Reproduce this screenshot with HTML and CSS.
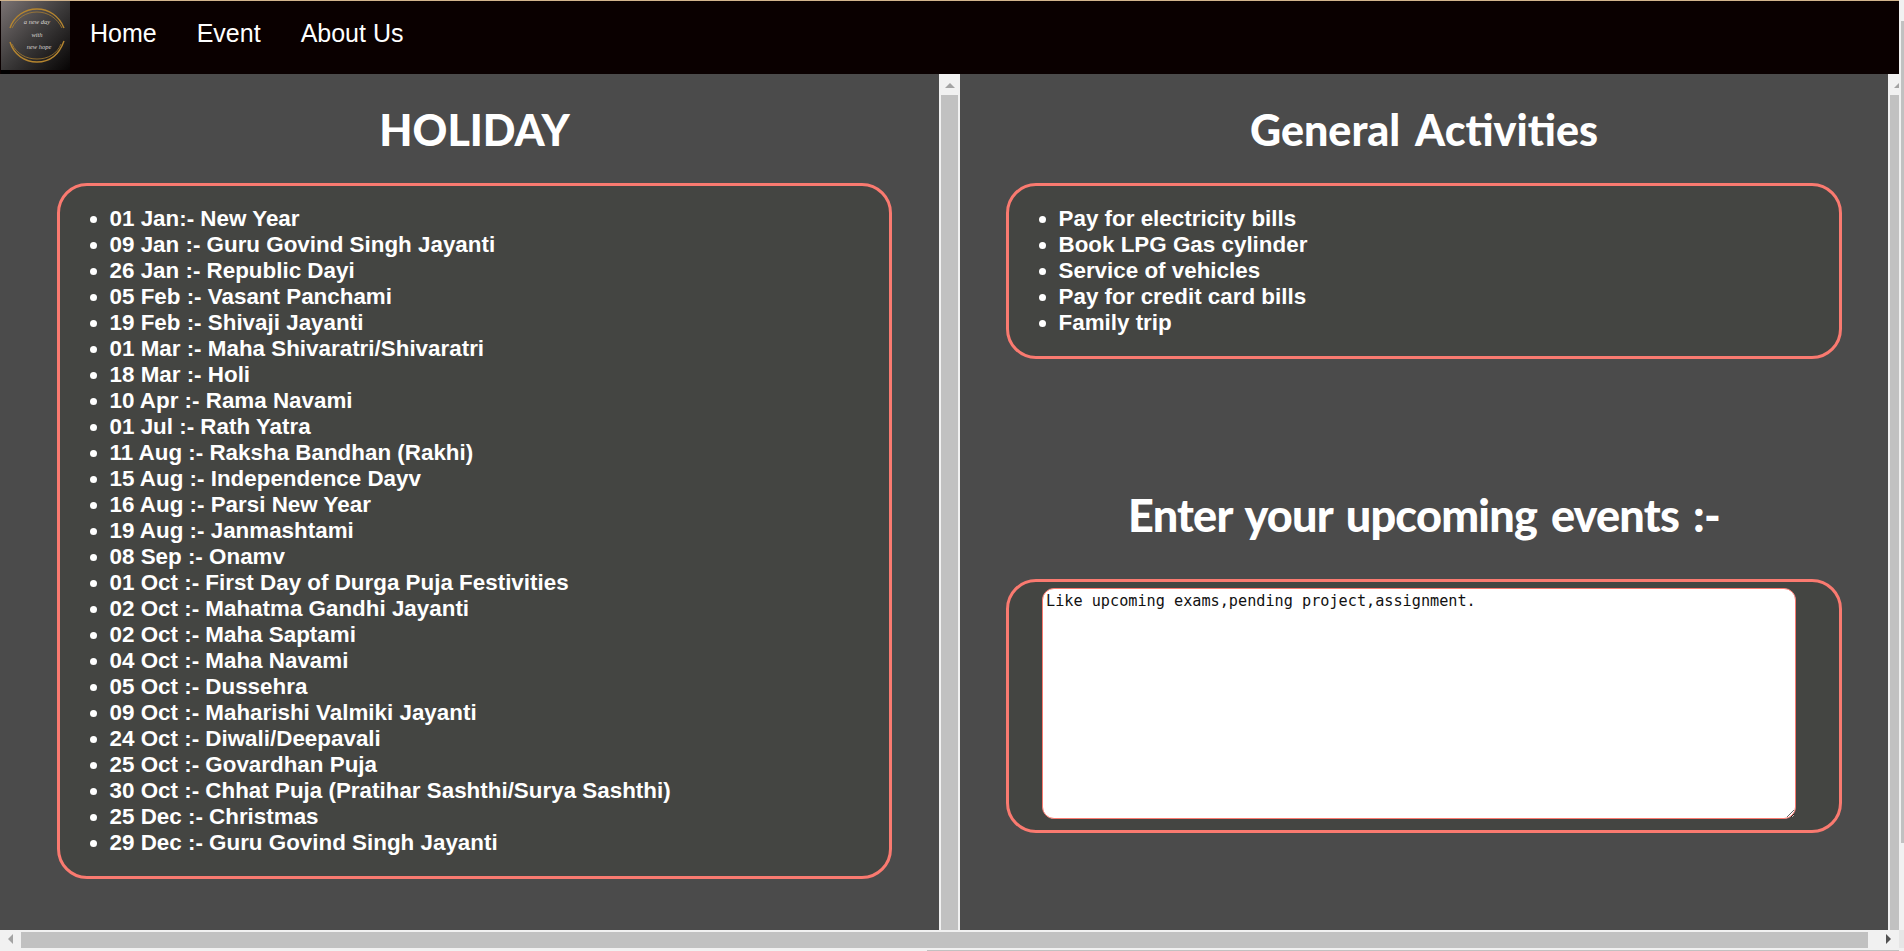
FILE: index.html
```html
<!DOCTYPE html>
<html lang="en">
<head>
<meta charset="utf-8">
<title>Event Planner</title>
<link rel="stylesheet" href="styles.css">
</head>
<body>
<div class="page">
  <div class="viewport">
    <nav class="nav">
      <svg class="logo" width="69" height="73" viewBox="0 0 69 73" aria-label="a new day with new hope">
        <defs>
          <linearGradient id="logoBg" x1="0" y1="0" x2="1" y2="1">
            <stop offset="0" stop-color="#7a7272"/>
            <stop offset="0.5" stop-color="#3c3a3a"/>
            <stop offset="1" stop-color="#060404"/>
          </linearGradient>
        </defs>
        <rect width="69" height="73" fill="#0a0000"/>
        <rect y="69" width="9" height="4" fill="#000"/>
        <rect width="69" height="69" fill="url(#logoBg)"/>
        <g fill="none" stroke="#b5852f">
          <path d="M9 27C13 15 24 8 36 8S58 15 63 27" stroke-width="1.4"/>
          <path d="M11 27C16 17 25 11 36 11S56 17 61 27" stroke-width="0.7"/>
          <path d="M9 41C13 54 24 61 36 61S58 54 63 40" stroke-width="1.4"/>
          <path d="M11 43C16 53 25 58 36 58S56 53 60 43" stroke-width="0.7"/>
        </g>
        <g class="logo-text" text-anchor="middle">
          <text x="36" y="23">a new day</text>
          <text x="36" y="36">with</text>
          <text x="38" y="48">new hope</text>
        </g>
      </svg>
      <a class="nav-link" href="#">Home</a>
      <a class="nav-link" href="#">Event</a>
      <a class="nav-link" href="#">About Us</a>
    </nav>
    <div class="split">
      <section class="pane pane-left">
        <h1 class="title">HOLIDAY</h1>
        <div class="card">
          <ul class="list">
            <li>01 Jan:- New Year</li>
            <li>09 Jan :- Guru Govind Singh Jayanti</li>
            <li>26 Jan :- Republic Dayi</li>
            <li>05 Feb :- Vasant Panchami</li>
            <li>19 Feb :- Shivaji Jayanti</li>
            <li>01 Mar :- Maha Shivaratri/Shivaratri</li>
            <li>18 Mar :- Holi</li>
            <li>10 Apr :- Rama Navami</li>
            <li>01 Jul :- Rath Yatra</li>
            <li>11 Aug :- Raksha Bandhan (Rakhi)</li>
            <li>15 Aug :- Independence Dayv</li>
            <li>16 Aug :- Parsi New Year</li>
            <li>19 Aug :- Janmashtami</li>
            <li>08 Sep :- Onamv</li>
            <li>01 Oct :- First Day of Durga Puja Festivities</li>
            <li>02 Oct :- Mahatma Gandhi Jayanti</li>
            <li>02 Oct :- Maha Saptami</li>
            <li>04 Oct :- Maha Navami</li>
            <li>05 Oct :- Dussehra</li>
            <li>09 Oct :- Maharishi Valmiki Jayanti</li>
            <li>24 Oct :- Diwali/Deepavali</li>
            <li>25 Oct :- Govardhan Puja</li>
            <li>30 Oct :- Chhat Puja (Pratihar Sashthi/Surya Sashthi)</li>
            <li>25 Dec :- Christmas</li>
            <li>29 Dec :- Guru Govind Singh Jayanti</li>
          </ul>
        </div>
      </section>
      <div class="vbar vbar-mid">
        <div class="vbtn"><span class="arrow-up"></span></div>
        <div class="thumb"></div>
      </div>
      <section class="pane pane-right">
        <h1 class="title">General Activities</h1>
        <div class="card">
          <ul class="list">
            <li>Pay for electricity bills</li>
            <li>Book LPG Gas cylinder</li>
            <li>Service of vehicles</li>
            <li>Pay for credit card bills</li>
            <li>Family trip</li>
          </ul>
        </div>
        <h1 class="title title-large">Enter your upcoming events :-</h1>
        <div class="card card-input">
          <textarea class="notes" placeholder="">Like upcoming exams,pending project,assignment.</textarea>
        </div>
      </section>
      <div class="vbar vbar-end">
        <div class="vbtn vbtn-end"><span class="arrow-up-cut"></span></div>
        <div class="thumb"></div>
      </div>
    </div>
    <div class="hbar">
      <div class="hbtn"><span class="arrow-left"></span></div>
      <div class="thumb"></div>
      <div class="hbtn hbtn-end"><span class="arrow-right"></span></div>
    </div>
    <div class="strip"><div class="strip-thumb"></div></div>
  </div>
  <div class="outerbar">
    <div class="outer-thumb"></div>
    <div class="corner"></div>
  </div>
</div>
</body>
</html>
```

FILE: styles.css
```css
* { box-sizing: border-box; }
html, body { margin: 0; padding: 0; }
body { font-family: "Liberation Sans", Arial, sans-serif; background: #f1f1f1; }

.page { display: flex; width: 1904px; height: 951px; overflow: hidden; background: #f1f1f1; }
.viewport { display: flex; flex-direction: column; width: 1899px; height: 951px; }

.nav { display: flex; align-items: flex-start; flex: none; height: 74px; padding-left: 1px; background: #0a0000; border-top: 1px solid #d2b48c; }
.logo { display: block; flex: none; }
.logo-text { fill: #d8d4d0; font-family: "Liberation Serif", serif; font-style: italic; font-size: 6.5px; }
.nav-link { padding: 0 20px; color: #fff; font-size: 25px; line-height: 65px; text-decoration: none; }

.split { display: flex; flex: 1; min-height: 0; }
.pane { flex: none; overflow: hidden; background: #4b4b4b; }
.pane-left { width: 939px; padding: 0 47px 0 57px; }
.pane-right { width: 928px; padding: 0 46px; }

.title { margin: 0; padding-top: 31px; height: 109px; color: #fff; font-family: Lato, "Open Sans", sans-serif; font-weight: 900; font-size: 43px; line-height: 50px; text-align: center; word-spacing: 6px; }
.title-large { height: auto; margin-top: 126px; padding-top: 0; padding-bottom: 34px; font-size: 45px; line-height: 60px; letter-spacing: -0.8px; word-spacing: 4px; }

.card { background: #444542; border: 3px solid #fa7a70; border-radius: 30px; }
.card-input { padding: 6px 43px 11px 33px; }
.list { margin: 0; padding: 20px 20px 20px 49.5px; color: #fff; font-size: 22.4px; font-weight: 700; line-height: 26px; }

.notes { display: block; width: 754px; height: 231px; padding: 3px 3px; background: #fff; color: #111; border: 1px solid #fa7a70; border-radius: 12px; outline: none; font-family: "DejaVu Sans Mono", monospace; font-size: 15.2px; line-height: 18px; }

.vbar { display: flex; flex-direction: column; flex: none; background: #f1f1f1; }
.vbar-mid { width: 21px; padding: 0 2px; }
.vbar-end { width: 11px; padding-left: 2px; }
.vbtn { display: flex; justify-content: center; padding-top: 9px; height: 21px; flex: none; }
.vbtn-end { justify-content: flex-end; }
.thumb { flex: 1; background: #c1c1c1; }

.arrow-up { width: 0; height: 0; border-left: 5px solid transparent; border-right: 5px solid transparent; border-bottom: 5px solid #a3a3a3; }
.arrow-up-cut { width: 0; height: 0; border-left: 5px solid transparent; border-bottom: 5px solid #a3a3a3; }

.hbar { display: flex; flex: none; height: 18px; padding-top: 2px; background: #f1f1f1; }
.hbtn { display: flex; align-items: center; flex: none; width: 21px; padding-left: 8px; padding-bottom: 2px; }
.hbtn-end { width: 31px; padding-left: 18px; }
.arrow-left { width: 0; height: 0; border-top: 5px solid transparent; border-bottom: 5px solid transparent; border-right: 5px solid #a3a3a3; }
.arrow-right { width: 0; height: 0; border-top: 5px solid transparent; border-bottom: 5px solid transparent; border-left: 5px solid #505050; }

.strip { flex: none; height: 3px; padding: 2px 0 0 927px; background: #f1f1f1; }
.strip-thumb { height: 1px; background: #c1c1c1; }

.outerbar { display: flex; flex-direction: column; flex: none; width: 5px; padding-top: 21px; background: #f1f1f1; }
.outer-thumb { height: 822px; margin-left: 2px; background: #c1c1c1; }
.corner { margin-top: 87px; height: 18px; background: #e6e6e6; }
```
